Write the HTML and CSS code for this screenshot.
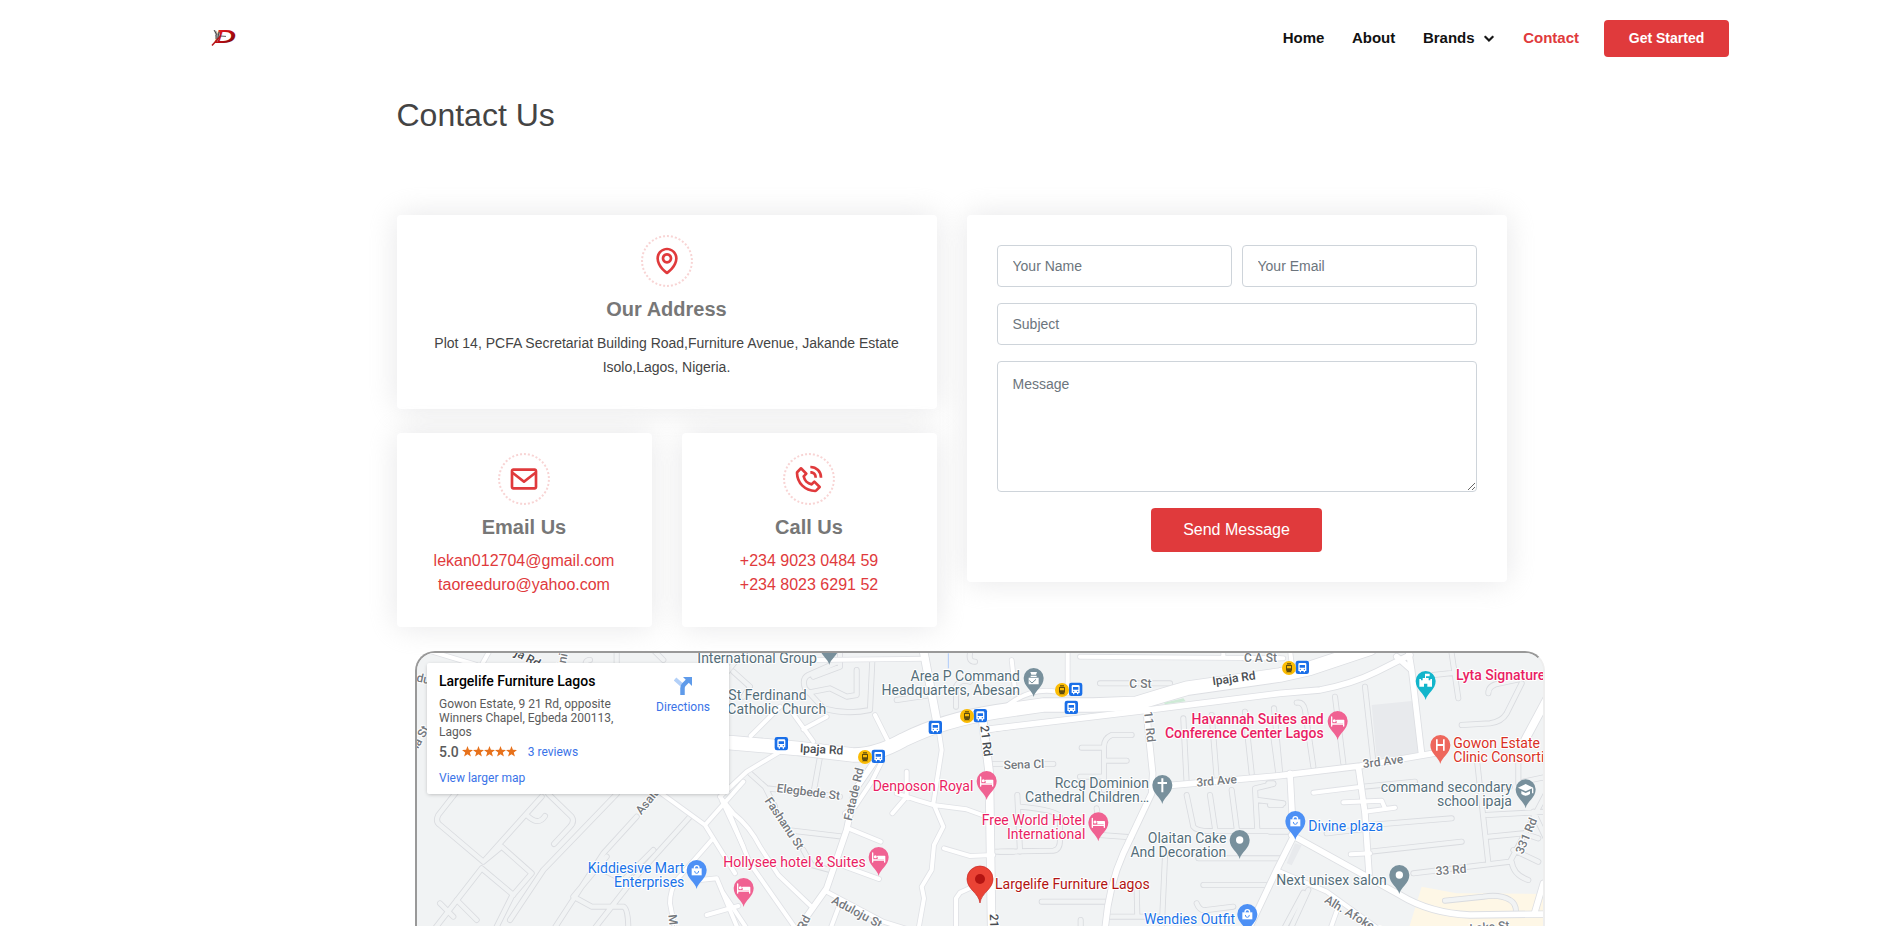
FILE: index.html
```html
<!DOCTYPE html>
<html lang="en">
<head>
<meta charset="utf-8">
<title>Contact Us</title>
<link rel="stylesheet" href="styles.css">
</head>
<body>
<header class="header">
  <a class="logo" href="#" aria-label="Home">
    <svg width="28" height="18" viewBox="0 0 28 18">
      <defs><linearGradient id="ruby" x1="0" y1="0" x2="1" y2="1"><stop offset="0" stop-color="#f33"/><stop offset=".45" stop-color="#c40d12"/><stop offset="1" stop-color="#5d0508"/></linearGradient></defs>
      <text class="logo-mark" transform="translate(3.2 14.4) scale(1.68 1)" x="0" y="0">D</text>
      <path d="M3 1l2.500 1 1 3L8 2l1 3-1 5-2 3-1-4-1-4z" fill="#a9a9a9"/><path d="M3 1l3 5M8 3L6.500 11M9 7l6 .4M5 6v4" stroke="#333" stroke-width=".8" fill="none"/>
      <path d="M9.500 7L1 16.500" stroke="#b5161b" stroke-width="1.500"/>
    </svg>
  </a>
  <nav class="nav">
    <a href="#">Home</a>
    <a href="#">About</a>
    <a href="#" class="has-menu">Brands
      <svg width="20" height="20" viewBox="0 0 24 24"><path d="M16.293 9.293 12 13.586 7.707 9.293l-1.414 1.414L12 16.414l5.707-5.707z" fill="currentColor" stroke="currentColor" stroke-width=".6"/></svg></a>
    <a href="#" class="active">Contact</a>
    <a href="#" class="get-started">Get Started</a>
  </nav>
</header>

<main class="contact">
  <h1>Contact Us</h1>
  <div class="columns">
    <div class="info">
      <section class="box wide">
        <span class="ring"><svg width="32" height="32" viewBox="0 0 24 24"><path d="M12 14c2.206 0 4-1.794 4-4s-1.794-4-4-4-4 1.794-4 4 1.794 4 4 4zm0-6c1.103 0 2 .897 2 2s-.897 2-2 2-2-.897-2-2 .897-2 2-2z"/><path d="M11.42 21.814a.998.998 0 0 0 1.16 0C12.884 21.599 20.029 16.44 20 10c0-4.411-3.589-8-8-8S4 5.589 4 9.995c-.029 6.445 7.116 11.604 7.42 11.819zM12 4c3.309 0 6 2.691 6 6.005.021 4.438-4.388 8.423-6 9.73-1.611-1.308-6.021-5.294-6-9.735 0-3.309 2.691-6 6-6z"/></svg></span>
        <h3>Our Address</h3>
        <p>Plot 14, PCFA Secretariat Building Road,Furniture Avenue, Jakande Estate<br>Isolo,Lagos, Nigeria.</p>
      </section>
      <section class="box">
        <span class="ring"><svg width="32" height="32" viewBox="0 0 24 24"><path d="M20 4H4c-1.103 0-2 .897-2 2v12c0 1.103.897 2 2 2h16c1.103 0 2-.897 2-2V6c0-1.103-.897-2-2-2zm0 2v.511l-8 6.223-8-6.222V6h16zM4 18V9.044l7.386 5.745a.994.994 0 0 0 1.228 0L20 9.044 20.002 18H4z"/></svg></span>
        <h3>Email Us</h3>
        <p class="links"><a href="#">lekan012704@gmail.com</a><a href="#">taoreeduro@yahoo.com</a></p>
      </section>
      <section class="box">
        <span class="ring"><svg width="32" height="32" viewBox="0 0 24 24"><path d="M16.57 22a2 2 0 0 0 1.43-.59l2.71-2.71a1 1 0 0 0 0-1.41l-4-4a1 1 0 0 0-1.41 0l-1.6 1.59a7.55 7.55 0 0 1-3-1.59 7.62 7.62 0 0 1-1.59-3l1.59-1.6a1 1 0 0 0 0-1.41l-4-4a1 1 0 0 0-1.41 0L2.59 6A2 2 0 0 0 2 7.43 15.28 15.28 0 0 0 6.3 17.7 15.28 15.28 0 0 0 16.57 22zM6 5.41 8.59 8 7.3 9.29a1 1 0 0 0-.3.91 10.12 10.12 0 0 0 2.3 4.5 10.08 10.08 0 0 0 4.5 2.3 1 1 0 0 0 .91-.27L16 15.41 18.59 18l-2 2a13.28 13.28 0 0 1-8.87-3.71A13.28 13.28 0 0 1 4 7.41zM20 11h2a8.81 8.81 0 0 0-9-9v2a6.77 6.77 0 0 1 7 7z"/><path d="M13 8c2.1 0 3 .9 3 3h2c0-3.22-1.78-5-5-5z"/></svg></span>
        <h3>Call Us</h3>
        <p class="links"><a href="#">+234 9023 0484 59</a><a href="#">+234 8023 6291 52</a></p>
      </section>
    </div>
    <form class="form">
      <div class="row"><input type="text" placeholder="Your Name"><input type="email" placeholder="Your Email"></div>
      <input type="text" placeholder="Subject">
      <textarea placeholder="Message"></textarea>
      <button type="button">Send Message</button>
    </form>
  </div>

  <div class="map">
    <svg class="map-canvas" width="1126" height="273" viewBox="21 39 3378 819">
      <defs>
        <g id="lanes">
          <path d="M140 455L85 525Q75 545 90 555L220 665 395 470M415 462L485 530Q495 545 480 560L432 612M350 525Q385 560 405 528M275 620L365 700 305 770 255 870M220 665L275 620M215 685L75 865M215 685L310 765M140 780L200 840M680 530L580 640 430 870M620 462L400 690 300 840M840 530L660 730 550 870M490 770L545 800 640 800Q655 805 655 870M580 690L640 720 730 630M490 770L590 650M130 830L90 790M620 30L620 80M530 90Q520 60 540 60M730 30L760 60"/>
          <g transform="translate(960)">
            <path d="M325 65L235 105Q215 115 225 145L280 205Q350 225 420 210L427 60M380 90L380 165 350 170 300 145 235 158M330 40L330 80 250 110M270 350L252 450M60 400L110 445 330 470M105 440L135 500M220 630L245 675 300 690M170 570L340 590M500 180L600 165M678 200L678 140Q690 115 720 125M720 40Q715 65 735 65M790 372L820 372M790 635L850 635M10 95L60 140 40 170M20 60L-20 110"/>
          </g>
          <g transform="translate(1770)">
            <path d="M300 130L510 130M395 285L335 285Q312 295 312 320L312 450M245 323L312 323M312 362L380 362M135 372L160 372M550 235L560 430M635 225L650 415M735 215L755 400M820 290L835 400M240 410L310 410M52 465L60 635M0 635L160 632Q180 630 180 600L180 530Q170 510 60 500M560 465L580 560Q590 575 640 573L860 573M630 465L645 565M695 450L710 565M820 432L765 445 772 570M772 480L850 490M290 505L295 540M595 655L850 655M610 735L810 735M590 790Q600 815 620 810L700 800M125 785L325 785M495 650L485 870M410 745L412 830M330 830L480 830M242 840L242 880M300 585L395 592"/>
          </g>
          <g transform="translate(2580)">
            <path d="M285 140L310 365M195 170L220 370M80 188Q100 185 105 210L130 380M12 205L30 395M575 255L660 250Q695 245 710 220L755 130M655 160Q655 135 690 130L760 115M545 40L565 175M490 105L555 98M280 440L435 425M170 580L300 565M300 555L545 535M300 635L575 605M430 700L720 665 850 420M622 370L655 670M650 525L830 515M657 590L760 580 805 595M730 630L805 665M725 665Q730 705 775 720M745 360L745 430M-5 430L10 430M0 495L35 495M115 750L60 870M100 758L40 870M0 575L60 575M640 445L720 440M760 425L830 410M790 515L830 600M525 782L640 770Q690 762 720 780 738 790 738 815"/>
          </g>
        </g>
        <g id="streets">
          <path d="M740 450L885 555 975 700M1000 425L885 555M905 600L800 720Q780 750 780 790L795 870M870 720L920 715 985 870M890 825L985 798M935 480L1000 620M240 30L215 75M50 30L200 75"/>
          <g transform="translate(960)">
            <path d="M150 335L50 395 -30 470M-30 470L10 520Q60 560 90 620L145 705 250 805M-10 500L60 670 200 870M-20 760L60 880M455 365L425 425 375 500 345 520M435 225L480 315M185 215L250 305M290 230L220 268M62 288L150 200M530 395L530 470 487 520M500 460L560 480 610 495 710 508 770 530M355 565L452 605M345 680L447 717M642 625L720 648 790 645M290 755L460 845 540 870M330 790L300 870M740 735L690 758 678 775 678 870M620 230L635 330 610 490 640 560 612 615 605 690 575 740 582 775 565 870M260 60L590 56M780 270L860 258"/>
          </g>
          <g transform="translate(1770)">
            <path d="M240 50L850 55M35 60L45 150M203 30L203 160M0 215Q80 140 170 155M670 20L670 50"/>
          </g>
          <g transform="translate(2580)">
            <path d="M130 458L275 440M220 487L335 482 345 505M285 515L375 503M242 643L300 640M20 690L170 755 330 870M205 800L180 870M-80 55L30 55M60 30L65 70"/>
          </g>
        </g>
        <g id="avenues">
          <path d="M1400 355L1335 450 1310 570 1250 745 1190 830 1150 900M1730 268L2200 212 2610 160 2730 150Q2830 130 2900 95L3000 45"/>
          <path d="M2208 205L2228 400 2225 460 2140 640Q2095 740 2085 870M2240 440L2610 407 2850 378 3100 335M2640 400L2650 590 2600 690 2515 870M2645 585L2970 765Q3060 820 3180 825L3410 822M2845 380L2865 520 2877 700M2960 50L3005 90 3035 345M2995 30L3005 90M3400 730L3375 815"/>
        </g>
        <g id="highways">
          <path d="M900 303L960 308 1160 325 1330 345Q1400 345 1480 300 1600 240 1760 215L1900 195 2050 195 2180 190Q2260 165 2330 145L2610 105 2700 85 2880 25"/>
        </g>
        <path id="main-road" d="M1715 215L1738 400 1745 870M1540 30L1580 240M3420 160L3345 300"/>
        <path id="pin" d="M0 57C-4 37-30 26-30 0A30 30 0 1 1 30 0C30 26 4 37 0 57Z"/>
        <g id="bed" fill="none" stroke="#fff"><path d="M-18-12V15M-18 9H18M18 15V-2H-3" stroke-width="4"/><path d="M-3-3h20v9H-3z" fill="#fff" stroke="none"/><circle cx="-10" cy="-1" r="4.500" fill="#fff" stroke="none"/></g>
        <g id="bag"><path d="M-15-5h30v21h-30z" fill="#fff"/><path d="M-7-5a7 8 0 0 1 14 0" fill="none" stroke="#fff" stroke-width="4"/><path d="M-6 4a6 6 0 0 0 12 0" fill="none" stroke="#4d90f5" stroke-width="3"/></g>
        <g id="bus"><rect x="-20" y="-20" width="40" height="40" rx="7" fill="#1a6fe8"/><path d="M-12-9Q-12-13-8-13H8Q12-13 12-9V11H8V15H4V11H-4V15H-8V11H-12Z" fill="#fff"/><path d="M-8-7H8V1H-8z" fill="#1a6fe8"/><circle cx="-6" cy="6" r="2" fill="#1a6fe8"/><circle cx="6" cy="6" r="2" fill="#1a6fe8"/></g>
        <g id="tram"><circle r="21" fill="#fbbc04"/><path d="M-9-7Q-9-10-5-10H5Q9-10 9-7V8H-9ZM-6-14H6V-11H-6ZM-9 13L-5 8H5L9 13" fill="#5f4c0c"/><path d="M-6-6H6V1H-6z" fill="#fbbc04"/></g>
      </defs>
      <rect x="0" y="0" width="3420" height="880" fill="#f1f3f4"/>
      <path d="M2885 195L3005 183 3030 340 2900 355Z" fill="#e8eaed"/>
      <path d="M2655 610l20 6-30 60-15-6z" fill="#e8eaed"/>
      <path d="M3035 740L3140 760 3410 762V870H2995Z" fill="#fef7e6"/>
      <path d="M1615 40v45" stroke="#aecbfa" stroke-width="3"/>
      <use href="#lanes" class="lane-edge"/><use href="#lanes" class="lane"/>
      <use href="#streets" class="street-edge"/><use href="#avenues" class="avenue-edge"/><use href="#main-road" class="main-edge"/><use href="#highways" class="highway-edge"/>
      <use href="#streets" class="street"/><use href="#avenues" class="avenue"/><use href="#main-road" class="main"/><use href="#highways" class="highway"/>
      <path d="M2262 188L2320 175 2327 184 2265 193Z" fill="#ceead6"/>

      <g class="road">
        <text class="dark" transform="translate(1169 337) rotate(3)">Ipaja Rd</text>
        <text class="dark" transform="translate(2409 136) rotate(-8)">Ipaja Rd</text>
        <text class="dark" transform="translate(1711 258) rotate(83)">21 Rd</text>
        <text class="dark" transform="translate(1739 822) rotate(88)">21 Rd</text>
        <text transform="translate(1099 456) rotate(7)">Elegbede St</text>
        <text transform="translate(1063 482) rotate(56)">Fashanu St</text>
        <text transform="translate(1325 544) rotate(-77)">Fatade Rd</text>
        <text transform="translate(1262 788) rotate(28)">Aduloju St</text>
        <text transform="translate(1183 872) rotate(-63)">Rd</text>
        <text transform="translate(1781 388) rotate(-2)">Sena Cl</text>
        <text x="2158" y="144">C St</text>
        <text x="2502" y="66">C A St</text>
        <text transform="translate(2202 215) rotate(84)">11 Rd</text>
        <text transform="translate(2360 440) rotate(-5)">3rd Ave</text>
        <text transform="translate(2860 384) rotate(-7)">3rd Ave</text>
        <text transform="translate(3078 706) rotate(-5)">33 Rd</text>
        <text transform="translate(3338 644) rotate(-67)">331 Rd</text>
        <text transform="translate(2741 786) rotate(31)">Alh. Afoke St</text>
        <text transform="translate(3180 878) rotate(-5)">Lake St</text>
        <text transform="translate(694 526) rotate(-51)">Asalu St</text>
        <text transform="translate(775 825) rotate(83)">Ma</text>
        <text transform="translate(18 124) rotate(12)">dur</text>
        <text transform="translate(24 328) rotate(-61)">la St</text>
        <text transform="translate(312 46) rotate(28)" class="dark">ja Rd</text>
        <text transform="translate(465 80) rotate(-78)">ini St</text>
      </g>

      <g class="place">
        <g class="slate">
          <text x="862" y="68">International Group</text>
          <text x="955" y="179">St Ferdinand</text><text x="952" y="221">Catholic Church</text>
          <text class="end" x="1830" y="122">Area P Command</text><text class="end" x="1830" y="164">Headquarters, Abesan</text>
          <text class="end" x="2217" y="443">Rccg Dominion</text><text class="end" x="2217" y="485">Cathedral Children…</text>
          <text class="end" x="2449" y="608">Olaitan Cake</text><text class="end" x="2449" y="650">And Decoration</text>
          <text class="end" x="3306" y="455">command secondary</text><text class="end" x="3306" y="497">school ipaja</text>
          <text class="end" x="2930" y="734">Next unisex salon</text>
        </g>
        <g class="pink">
          <text class="end" x="1690" y="453">Denposon Royal</text>
          <text class="end" x="2026" y="554">Free World Hotel</text><text class="end" x="2026" y="596">International</text>
          <text class="end" x="1367" y="680">Hollysee hotel &amp; Suites</text>
          <text class="end strong" x="2741" y="251">Havannah Suites and</text><text class="end strong" x="2741" y="293">Conference Center Lagos</text>
          <text class="strong" x="3138" y="120">Lyta Signature</text>
        </g>
        <g class="blue">
          <text class="end" x="823" y="699">Kiddiesive Mart</text><text class="end" x="823" y="741">Enterprises</text>
          <text x="2695" y="572">Divine plaza</text>
          <text class="end" x="2475" y="851">Wendies Outfit</text>
        </g>
        <g class="red"><text x="3130" y="323">Gowon Estate</text><text x="3130" y="365">Clinic Consortium</text></g>
        <text class="selected" x="1755" y="746">Largelife Furniture Lagos</text>
      </g>

      <g fill="#78909c">
        <use href="#pin" x="1258" y="18"/><use href="#pin" x="1871" y="114"/><use href="#pin" x="2257" y="435"/><use href="#pin" x="2489" y="600"/><use href="#pin" x="3347" y="448"/><use href="#pin" x="2968" y="705"/>
      </g>
      <g fill="#f06292">
        <use href="#pin" x="1730" y="423"/><use href="#pin" x="1406" y="651"/><use href="#pin" x="1001" y="744"/><use href="#pin" x="2065" y="547"/><use href="#pin" x="2783" y="243"/>
      </g>
      <g fill="#4d90f5"><use href="#pin" x="860" y="690"/><use href="#pin" x="2656" y="543"/><use href="#pin" x="2512" y="822"/></g>
      <use href="#pin" x="3047" y="123" fill="#12b5cb"/><use href="#pin" x="3091" y="315" fill="#ee675c"/>
      <use href="#bed" x="1730" y="423"/><use href="#bed" x="1406" y="651"/><use href="#bed" x="1001" y="744"/><use href="#bed" x="2065" y="547"/><use href="#bed" x="2783" y="243"/>
      <use href="#bag" x="860" y="690"/><use href="#bag" x="2656" y="543"/><use href="#bag" x="2512" y="822"/>
      <g fill="#fff">
        <circle cx="2489" cy="600" r="11"/><circle cx="2968" cy="705" r="11"/>
        <path d="M2254 415h6v11h11v6h-11v25h-6v-25h-11v-6h11z"/>
        <path d="M3347 432l23 11-23 11-23-11zM3334 453l13 6 13-6v9q-13 10-26 0zM3366 445h4v15h-4z"/>
        <path d="M3078 298h5v14h16v-14h5v34h-5v-14h-16v14h-5z"/>
        <path d="M3045 101h14v8h-11v5h8v7h5v-4h5v23h-14v-9h-10v9h-14v-23h5v4h5v-7h7z"/>
        <path d="M1861 96h20l-3 8h-14zM1862 107h18v4h-18zM1856 113h30v20h-30z"/>
      </g>
      <path d="M1858 122l8 7 12-11" stroke="#78909c" stroke-width="3" fill="none"/>
      <path d="M1710 789C1706 758 1671 748 1671 717A39 39 0 1 1 1749 717C1749 748 1714 758 1710 789Z" fill="#ea4335" stroke="#c5221f" stroke-width="2"/><circle cx="1710" cy="717" r="15" fill="#b31412"/>
      <use href="#bus" x="1114" y="311"/><use href="#bus" x="1405" y="349"/><use href="#bus" x="1576" y="262"/><use href="#bus" x="1711" y="227"/><use href="#bus" x="1997" y="148"/><use href="#bus" x="1984" y="202"/><use href="#bus" x="2677" y="82"/>
      <use href="#tram" x="1365" y="351"/><use href="#tram" x="1671" y="228"/><use href="#tram" x="1956" y="150"/><use href="#tram" x="2637" y="84"/>
    </svg>
    <aside class="place-card">
      <div class="details">
        <strong>Largelife Furniture Lagos</strong>
        <address>Gowon Estate, 9 21 Rd, opposite<br>Winners Chapel, Egbeda 200113,<br>Lagos</address>
        <div class="rating"><span>5.0</span>
          <svg width="55" height="11" viewBox="0 0 55 11"><defs><path id="star" d="M5.500 0L6.900 3.800 11 4 7.800 6.500 8.900 10.500 5.500 8.200 2.100 10.500 3.200 6.500 0 4 4.100 3.800Z"/></defs><g fill="#e7711b"><use href="#star"/><use href="#star" x="11"/><use href="#star" x="22"/><use href="#star" x="33"/><use href="#star" x="44"/></g></svg>
          <a href="#">3 reviews</a></div>
        <a href="#">View larger map</a>
      </div>
      <a href="#" class="directions">
        <svg width="18" height="18" viewBox="0 0 18 18"><path d="M1 2l8 7" stroke="#b3d0f8" stroke-width="4"/><path d="M8.500 18V11Q8.500 9 10 7.500L14 3.500" fill="none" stroke="#5f9bea" stroke-width="4.500"/><path d="M9 0h9v9z" fill="#5f9bea"/></svg>
        Directions</a>
    </aside>
  </div>
</main>
</body>
</html>
```

FILE: styles.css
```css
* { box-sizing: border-box; }
html, body { height: 926px; overflow: hidden; }
body { margin: 0; background: #fff; color: #444; font-family: "Liberation Sans", Arial, sans-serif; }
a { color: #e03a3c; text-decoration: none; }

.header { display: flex; align-items: center; justify-content: space-between; height: 77px; padding: 0 172px 0 211px; }
.logo { display: flex; padding-bottom: 1px; }
.logo-mark { font: italic bold 18px "Liberation Sans", sans-serif; fill: url(#ruby); }
.nav { display: flex; align-items: center; font-size: 15px; line-height: 18px; font-weight: 700; }
.nav a { color: #111; margin-left: 27.6px; padding-bottom: 1px; }
.nav .has-menu { display: flex; align-items: center; }
.has-menu svg { margin: 0 -3px 0 4px; }
.nav .active { color: #e03a3c; }
.nav .get-started { margin-left: 25px; padding: 0; width: 125px; height: 37px; border-radius: 4px; background: #e03a3c; color: #fff; font-size: 14px; line-height: 37px; text-align: center; }

.contact { width: 1110px; margin-left: 396.5px; padding-top: 19px; }
h1 { margin: 0; font-size: 32px; line-height: 38px; font-weight: 400; }
.columns { display: flex; gap: 30px; align-items: flex-start; padding-top: 81px; }
.info { display: grid; grid-template-columns: 255px 255px; gap: 24px 30px; width: 540px; }
.box { height: 194px; padding: 20px 0 30px; text-align: center; border-radius: 4px; box-shadow: 0 0 30px rgba(214, 215, 216, .6); }
.wide { grid-column: 1 / 3; }
.box, .form { background: #fff; }
.ring { display: flex; align-items: center; justify-content: center; width: 52px; height: 52px; margin: 0 auto; border: 2px dotted #f8d4d4; border-radius: 50%; }
.ring svg { fill: #e03a3c; }
h3 { margin: 10px 0; font-size: 20px; line-height: 24px; font-weight: 700; color: #777; }
.box p { margin: 0; font-size: 14px; line-height: 24px; }
.box .links { display: flex; flex-direction: column; font-size: 16px; }

.form { display: flex; flex-direction: column; gap: 16px; width: 540px; height: 367px; padding: 30px; border-radius: 4px; box-shadow: 0 0 30px rgba(214, 215, 216, .6); }
.row { display: flex; gap: 10px; }
.form input, .form textarea { width: 100%; height: 42px; margin: 0; padding: 0 15px; border: 1px solid #ced4da; border-radius: 4px; background: #fff; font: 14px/21px "Liberation Sans", Arial, sans-serif; }
.row input { flex: 1; }
.form textarea { height: 131px; padding: 12px 15px; }
.form ::placeholder { color: #6c757d; opacity: 1; }
.form button { align-self: center; width: 171px; height: 44px; border: 0; border-radius: 4px; background: #e03a3c; color: #fff; font: 16px "Liberation Sans", Arial, sans-serif; }

.map { position: relative; width: 1130px; height: 275px; margin: 24px 0 0 18.5px; border: 2px solid; border-color: #999 #eee #eee #999; border-bottom: 0; border-radius: 20px 20px 0 0; overflow: hidden; background: #f1f3f4; }
.map-canvas { display: block; }
.map-canvas use { stroke-linejoin: round; stroke-linecap: round; }
.lane-edge, .lane, .street-edge, .street, .avenue-edge, .avenue, .main-edge, .main, .highway-edge, .highway { fill: none; }
.lane-edge { stroke: #d9dbdf; stroke-width: 18; }
.lane { stroke: #f1f3f4; stroke-width: 13; }
.street-edge { stroke: #e0e2e6; stroke-width: 17; }
.street { stroke: #fff; stroke-width: 12; }
.avenue-edge { stroke: #dddfe3; stroke-width: 22; }
.avenue { stroke: #fff; stroke-width: 17; }
.main-edge { stroke: #dddfe3; stroke-width: 28; }
.main { stroke: #fff; stroke-width: 23; }
.highway-edge { stroke: #dddfe3; stroke-width: 46; }
.highway { stroke: #fff; stroke-width: 41; }
.map-canvas text { font-family: Roboto, sans-serif; paint-order: stroke; stroke: #fff; stroke-width: 6px; stroke-linejoin: round; }
.road text { font-size: 36px; font-weight: 500; fill: #75797e; }
.road .dark { fill: #494d52; }
.place text { font-size: 42px; }
.place .end { text-anchor: end; }
.place .strong { font-weight: 500; }
.slate { fill: #546e7a; }
.pink { fill: #e91e63; }
.blue { fill: #1a73e8; }
.red { fill: #d93025; }
.selected { fill: #b31412; }

.place-card { position: absolute; left: 10px; top: 10px; display: flex; justify-content: space-between; width: 302px; height: 131px; padding: 9px 19px 0 12px; border-radius: 2px; background: #fff; box-shadow: 0 1px 4px -1px rgba(0, 0, 0, .3); font: 12px/14px Roboto, sans-serif; color: #5b5b5b; }
.place-card a { color: #3a73e8; }
.details strong { display: block; font-size: 14px; line-height: 18px; font-weight: 500; color: #000; }
address { margin-top: 7px; font-style: normal; }
.rating { display: flex; align-items: center; height: 16px; margin: 5px 0 11px; }
.rating span { font-size: 14px; font-weight: 500; }
.rating svg { margin: 0 11px 1px 3px; }
.directions { display: flex; flex-direction: column; align-items: center; gap: 5px; padding-top: 5px; }
```
